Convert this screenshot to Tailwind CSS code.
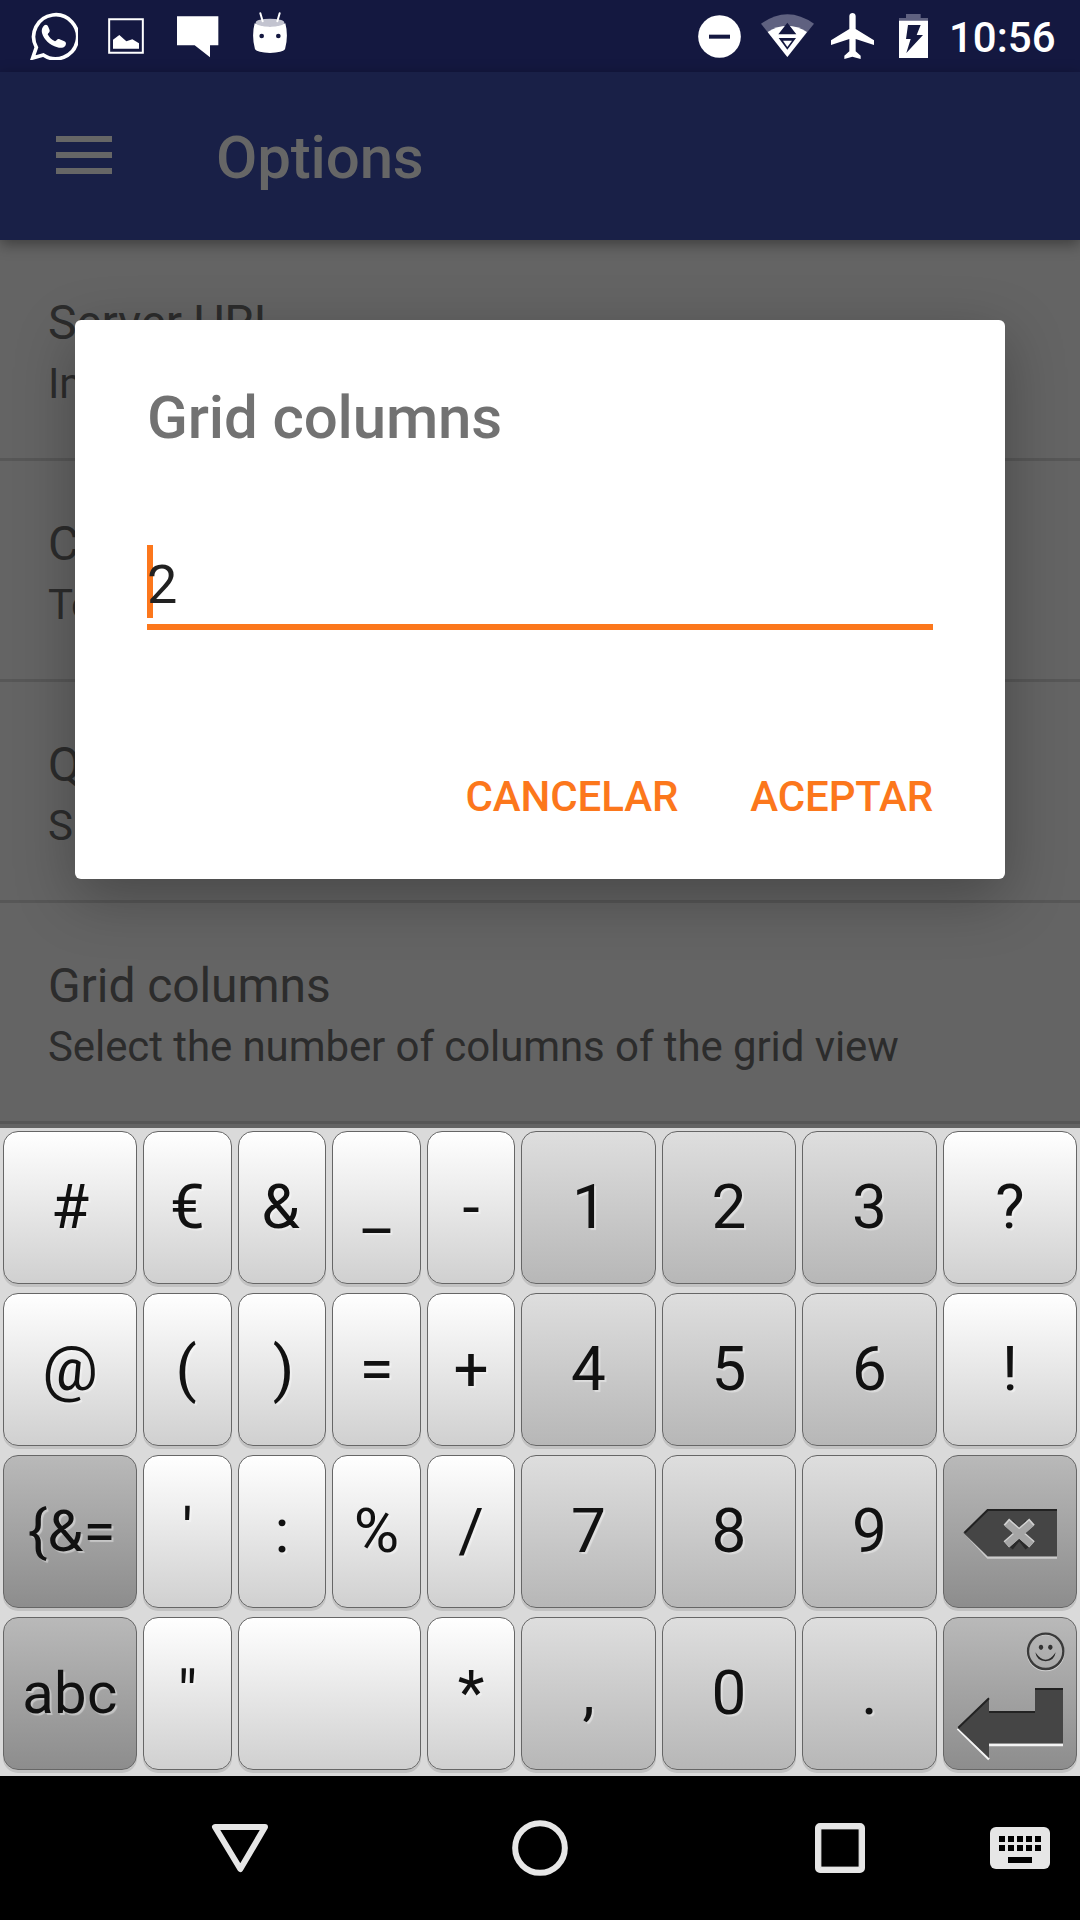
<!DOCTYPE html>
<html lang="es">
<head>
<meta charset="utf-8">
<title>Options</title>
<script src="https://cdn.jsdelivr.net/npm/@tailwindcss/browser@4"></script>
</head>
<body class="w-[1080px] h-[1920px] overflow-hidden bg-black font-['Roboto',sans-serif]">
<div class="relative flex flex-col w-[1080px] h-[1920px]">

  <!-- Status bar -->
  <div class="flex h-[72px] shrink-0 bg-[#141840] text-white">
    <svg class="ml-[30px] mt-3 size-12" viewBox="90 36 144 144" fill="none">
      <path d="M109 142A66 66 0 1 1 130 165L98 174Z" stroke="#fff" stroke-width="11"/>
      <path d="M133 76c5-4 9-2 12 5l4 10c1 5-4 8-6 12 5 10 12 17 22 21 5-2 7-9 12-7l16 7c6 3 6 8 3 13-5 7-15 8-24 5-24-7-40-23-46-43-2-8 0-17 7-23Z" fill="#fff"/>
    </svg>
    <svg class="ml-[30px] mt-[18px] size-9" viewBox="324 54 108 108">
      <path d="M327.500 57.500h101v101h-101z" fill="none" stroke="#fff" stroke-width="6"/>
      <path d="M339 146v-27l19-14 21 19 18-6 20 12v16z" fill="#fff"/>
    </svg>
    <svg class="ml-[33px] mt-4 w-[42px] h-[42px]" viewBox="531 48 126 126"><path d="M531 49h124v87h-25v36l-46-36h-53z" fill="#fff"/></svg>
    <svg class="ml-[33px] mt-3 w-9 h-[42px]" viewBox="756 36 108 126">
      <path d="M764 70Q810 87 856 70Q866 107 855 148Q848 158 810 159Q772 158 765 148Q754 107 764 70Z" fill="#fff"/>
      <ellipse cx="810" cy="68" rx="43" ry="12" fill="#c3c4d0"/>
      <path d="M781 40l7 24M839 40l-7 24" stroke="#fff" stroke-width="6" stroke-linecap="round"/>
      <circle cx="785" cy="108" r="7" fill="#141840"/><circle cx="835" cy="108" r="7" fill="#141840"/>
    </svg>
    <svg class="ml-[410px] mt-[15px] size-[43px]" viewBox="114 45 129 129"><circle cx="178.500" cy="109.500" r="64" fill="#fff"/><path d="M147 104h63v12h-63z" fill="#141840"/></svg>
    <svg class="ml-[20px] mt-[14px] w-[53px] h-[43px]" viewBox="303 42 159 129">
      <path d="M303 71Q382 14 462 71L382 171Z" fill="#5f6180"/>
      <path d="M323 96Q382 58 441 96L382 171Z" fill="#fff"/>
      <path d="M382 68l27 35h-54zM356 114h52l-26 35z" fill="#141840"/>
      <path d="M369 122h27l-14 19z" fill="#fff"/>
    </svg>
    <svg class="ml-[17px] mt-[13px] w-[43px] h-[46px]" viewBox="513 39 129 138"><path d="M568 48c0-12 19-12 19 0v39l55 34v14l-55-18v37l15 13v10l-25-7-24 7v-10l15-13v-37l-55 18v-14l55-34z" fill="#fff"/></svg>
    <svg class="ml-[25px] mt-[14px] w-[29px] h-11" viewBox="717 42 87 132">
      <path d="M738 42h44v12h22v9h-87v-9h21z" fill="#5f6180"/><path d="M717 62h87v112h-87z" fill="#fff"/>
      <path d="M744 75h38l-12 30h19l-50 54 13-42h-14z" fill="#141840"/>
    </svg>
    <span class="ml-[21px] mt-[10px] text-[42px] leading-[56px] font-medium">10:56</span>
  </div>

  <!-- App bar -->
  <div class="relative flex h-[168px] shrink-0 items-center bg-[#192047] shadow-[0_4px_14px_rgba(0,0,0,0.4)]">
    <div class="ml-14 mb-[2px] flex w-14 flex-col gap-2.5">
      <div class="h-1.5 bg-[#666]"></div><div class="h-1.5 bg-[#666]"></div><div class="h-1.5 bg-[#666]"></div>
    </div>
    <h1 class="ml-[104px] pt-[4px] text-[60px] leading-[72px] font-medium tracking-[-0.15px] text-[#666]">Options</h1>
  </div>

  <!-- Preferences -->
  <div class="h-[888px] shrink-0 overflow-hidden bg-[#646464] tracking-[-0.085px] text-[#2c2c2c]">
    <div class="h-[221px] border-b-[3px] border-[#575757] pl-12 pt-[55px]">
      <div class="text-[48px] leading-[56px] tracking-[-0.25px]">Server URL</div>
      <div class="mt-2 text-[42px] leading-[50px]">In</div>
    </div>
    <div class="h-[221px] border-b-[3px] border-[#575757] pl-12 pt-[55px]">
      <div class="text-[48px] leading-[56px]">C</div>
      <div class="mt-2 text-[42px] leading-[50px]">Te</div>
    </div>
    <div class="h-[221px] border-b-[3px] border-[#575757] pl-12 pt-[55px]">
      <div class="text-[48px] leading-[56px]">Q</div>
      <div class="mt-2 text-[42px] leading-[50px]">S</div>
    </div>
    <div class="h-[221px] border-b-[3px] border-[#575757] pl-12 pt-[55px]">
      <div class="text-[48px] leading-[56px]">Grid columns</div>
      <div class="mt-2 text-[42px] leading-[50px] whitespace-nowrap">Select the number of columns of the grid view</div>
    </div>
  </div>

  <!-- Keyboard -->
  <div class="relative grid h-[648px] shrink-0 grid-cols-[134px_89px_88px_89px_88px_135px_134px_135px_134px] auto-rows-[153px] gap-x-1.5 gap-y-[9px] bg-[#dadada] pl-[3px] pt-[3px] text-[62px] leading-[72px] text-[#111] text-shadow-[2px_2px_1px_rgba(255,255,255,0.4)] [&>div]:flex [&>div]:items-center [&>div]:justify-center [&>div]:rounded-[15px] [&>div]:border [&>div]:border-[#666] [&>div]:bg-linear-to-b [&>div]:pb-[2px] [&>div]:shadow-[0_3px_0_#c2c2c2]">
    <div class="from-white to-[#d0d0d0]">#</div>
    <div class="from-white to-[#d0d0d0]">€</div>
    <div class="from-white to-[#d0d0d0] pr-[3px]">&amp;</div>
    <div class="from-white to-[#d0d0d0]">_</div>
    <div class="from-white to-[#d0d0d0]">-</div>
    <div class="from-[#dedede] to-[#b7b7b7] pl-[2px]">1</div>
    <div class="from-[#dedede] to-[#b7b7b7]">2</div>
    <div class="from-[#dedede] to-[#b7b7b7]">3</div>
    <div class="from-white to-[#d0d0d0]">?</div>

    <div class="from-white to-[#d0d0d0]">@</div>
    <div class="from-white to-[#d0d0d0] pr-[3px]">(</div>
    <div class="from-white to-[#d0d0d0] pl-[3px]">)</div>
    <div class="from-white to-[#d0d0d0]">=</div>
    <div class="from-white to-[#d0d0d0]">+</div>
    <div class="from-[#dedede] to-[#b7b7b7]">4</div>
    <div class="from-[#dedede] to-[#b7b7b7]">5</div>
    <div class="from-[#dedede] to-[#b7b7b7]">6</div>
    <div class="from-white to-[#d0d0d0]">!</div>

    <div class="from-[#b9b9b9] to-[#8d8d8d] pl-[3px] text-[58px]">{&amp;=</div>
    <div class="from-white to-[#d0d0d0]">'</div>
    <div class="from-white to-[#d0d0d0]">:</div>
    <div class="from-white to-[#d0d0d0]">%</div>
    <div class="from-white to-[#d0d0d0]">/</div>
    <div class="from-[#dedede] to-[#b7b7b7]">7</div>
    <div class="from-[#dedede] to-[#b7b7b7]">8</div>
    <div class="from-[#dedede] to-[#b7b7b7]">9</div>
    <div class="from-[#b9b9b9] to-[#8d8d8d]">
      <svg class="mt-[2px] h-[153px] w-[134px] shrink-0" viewBox="69 45 402 459">
        <path d="M130 278l73 72h208v6H202z" fill="#ccc"/>
        <path d="M130 278l73-71h208v142H203z" fill="#454545"/>
        <path d="M134 278l69-68h208" fill="none" stroke="#222" stroke-width="6"/>
        <path d="M269 244l57 73M326 244l-57 73" stroke="#2a2a2a" stroke-width="24" transform="translate(0 4)"/>
        <path d="M259 245l77 68M336 245l-77 68" stroke="#d2d2d2" stroke-width="25"/>
        <path d="M261 250l73 64M334 250l-73 64" stroke="#a5a5a5" stroke-width="21"/>
      </svg>
    </div>

    <div class="from-[#b9b9b9] to-[#8d8d8d] text-[58px] tracking-[0.4px]">abc</div>
    <div class="from-white to-[#d0d0d0]">"</div>
    <div class="col-span-2 from-white to-[#d0d0d0]"></div>
    <div class="from-white to-[#d0d0d0]">*</div>
    <div class="from-[#dedede] to-[#b7b7b7]">,</div>
    <div class="from-[#dedede] to-[#b7b7b7]">0</div>
    <div class="from-[#dedede] to-[#b7b7b7]">.</div>
    <div class="from-[#b9b9b9] to-[#8d8d8d]">
      <svg class="mt-[2px] h-[153px] w-[134px] shrink-0" viewBox="69 531 402 459" fill="none">
        <circle cx="377" cy="637" r="54" stroke="#d4d4d4" stroke-width="6"/>
        <circle cx="377" cy="634" r="53" stroke="#3a3a3a" stroke-width="7"/>
        <ellipse cx="363" cy="622" rx="6.500" ry="8" fill="#333"/><ellipse cx="391" cy="622" rx="6.500" ry="8" fill="#333"/>
        <path d="M346 637q31 45 61 0q-4 26-30 27q-27-1-31-27Z" fill="#2a2a2a"/>
        <path d="M113 866l94 92M207 915h222" stroke="#f4f4f4" stroke-width="7"/>
        <path d="M113 864l94-91v40h138v-69h84v166H207v44z" fill="#454545"/>
        <path d="M115 863l92-88M207 816h138M345 747h84" stroke="#222" stroke-width="6"/>
      </svg>
    </div>
  </div>

  <!-- Navigation bar -->
  <div class="flex h-36 shrink-0 bg-black">
    <svg class="ml-[180px] mt-1 h-[140px] w-[420px]" viewBox="0 0 1260 420" fill="none" stroke="#e6e6e6" stroke-width="18">
      <path d="M105 141h150l-74 126z" stroke-linejoin="round"/><circle cx="1080" cy="204" r="74.500"/>
    </svg>
    <svg class="ml-[180px] mt-1 h-[140px] w-[300px]" viewBox="0 0 900 420">
      <rect x="114" y="138" width="132" height="132" rx="6" fill="none" stroke="#e6e6e6" stroke-width="18"/>
      <path d="M122 146h116v116H122z"/>
      <path d="M122.500 146.500h115v115h-115z" fill="none" stroke="#fff" stroke-width="3"/>
      <rect x="630" y="141" width="180" height="126" rx="18" fill="#e6e6e6"/>
      <path d="M657 168h18v18h-18zM684 168h18v18h-18zM711 168h18v18h-18zM738 168h18v18h-18zM765 168h18v18h-18zM657 195h18v18h-18zM684 195h18v18h-18zM711 195h18v18h-18zM738 195h18v18h-18zM765 195h18v18h-18zM684 231h72v18h-72z"/>
    </svg>
  </div>

  <!-- Dialog; the wrapper clips its shadow at the app bar and the keyboard -->
  <div class="pointer-events-none absolute left-0 top-[240px] h-[888px] w-[1080px] overflow-hidden">
    <div class="absolute left-[75px] top-20 h-[559px] w-[930px] rounded-md bg-white px-[72px] pt-[62px] shadow-[0_18px_60px_rgba(0,0,0,0.29)]">
      <h2 class="text-[60px] leading-[72px] font-medium tracking-[-0.13px] text-[#727272]">Grid columns</h2>
      <div class="relative mt-[91px] h-[85px] border-b-[6px] border-[#fc771c] pt-[4px] text-[54px] leading-[72px] text-[#212121]">
        <div class="absolute left-0 top-0 h-[73px] w-1.5 bg-[#fc771c]"></div>
        <span class="relative">2</span>
      </div>
      <div class="mt-[139px] flex justify-end gap-[72px] text-[42px] leading-[56px] font-medium tracking-[-0.1px] text-[#fc771c]">
        <span>CANCELAR</span><span>ACEPTAR</span>
      </div>
    </div>
  </div>
</div>
</body>
</html>
